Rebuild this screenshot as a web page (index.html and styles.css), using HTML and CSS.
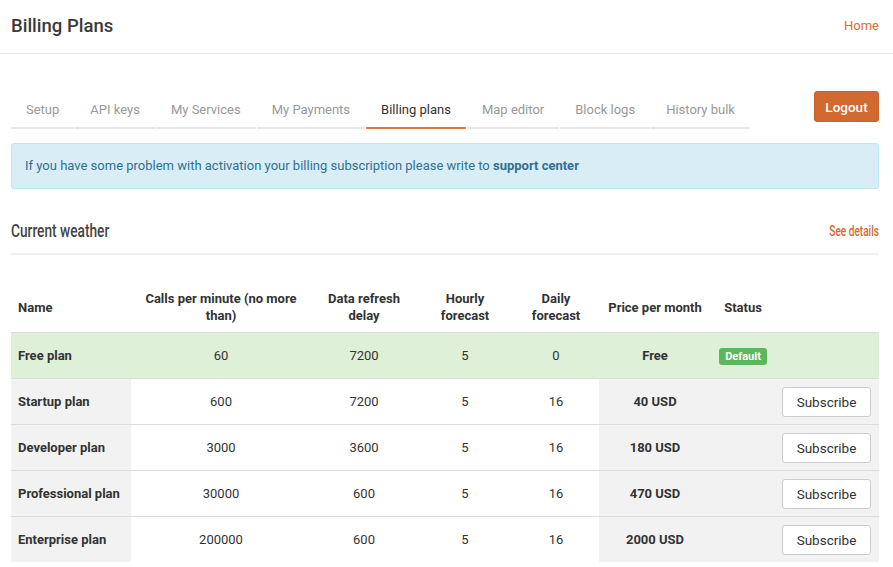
FILE: index.html
```html
<!DOCTYPE html>
<html>
<head>
<meta charset="utf-8">
<title>Billing Plans</title>
<link rel="stylesheet" href="styles.css">
</head>
<body>
<header class="topbar">
  <h1 class="title">Billing Plans</h1>
  <a class="home" href="#">Home</a>
</header>
<main class="page">
  <div class="navrow">
    <nav class="tabs">
      <a class="tab" href="#">Setup</a>
      <a class="tab" href="#">API keys</a>
      <a class="tab" href="#">My Services</a>
      <a class="tab" href="#">My Payments</a>
      <a class="tab active" href="#">Billing plans</a>
      <a class="tab" href="#">Map editor</a>
      <a class="tab" href="#">Block logs</a>
      <a class="tab" href="#">History bulk</a>
    </nav>
    <button class="logout">Logout</button>
  </div>
  <div class="alert">If you have some problem with activation your billing subscription please write to <b>support center</b></div>
  <div class="section-head">
    <h2 class="section-title"><span class="cond">Current weather</span></h2>
    <a class="details" href="#"><span class="cond">See details</span></a>
  </div>
  <table class="plans">
    <colgroup>
      <col class="c-name"><col class="c-calls"><col class="c-refresh"><col class="c-hourly"><col class="c-daily"><col class="c-price"><col class="c-status"><col class="c-action">
    </colgroup>
    <thead>
      <tr>
        <th class="left">Name</th>
        <th>Calls per minute (no more than)</th>
        <th>Data refresh delay</th>
        <th>Hourly forecast</th>
        <th>Daily forecast</th>
        <th>Price per month</th>
        <th>Status</th>
        <th></th>
      </tr>
    </thead>
    <tbody>
      <tr class="current">
        <td class="name">Free plan</td><td>60</td><td>7200</td><td>5</td><td>0</td><td class="price">Free</td><td class="status"><span class="badge">Default</span></td><td class="action"></td>
      </tr>
      <tr>
        <td class="name">Startup plan</td><td>600</td><td>7200</td><td>5</td><td>16</td><td class="price">40 USD</td><td class="status"></td><td class="action"><button class="sub">Subscribe</button></td>
      </tr>
      <tr>
        <td class="name">Developer plan</td><td>3000</td><td>3600</td><td>5</td><td>16</td><td class="price">180 USD</td><td class="status"></td><td class="action"><button class="sub">Subscribe</button></td>
      </tr>
      <tr>
        <td class="name">Professional plan</td><td>30000</td><td>600</td><td>5</td><td>16</td><td class="price">470 USD</td><td class="status"></td><td class="action"><button class="sub">Subscribe</button></td>
      </tr>
      <tr>
        <td class="name">Enterprise plan</td><td>200000</td><td>600</td><td>5</td><td>16</td><td class="price">2000 USD</td><td class="status"></td><td class="action"><button class="sub">Subscribe</button></td>
      </tr>
    </tbody>
  </table>
</main>
</body>
</html>
```
FILE: styles.css
```css
* { box-sizing: border-box; }
body {
  margin: 0;
  font-family: Roboto, "Liberation Sans", sans-serif;
  color: #333;
  background: #fff;
}
a { text-decoration: none; }
.topbar {
  height: 54px;
  border-bottom: 1px solid #e7e7e7;
  display: flex;
  align-items: center;
  justify-content: space-between;
  padding: 0 14px 2px 11px;
}
.title {
  margin: 0;
  font-size: 18.5px;
  font-weight: 500;
  color: #3a3a3a;
}
.home {
  font-size: 13px;
  color: #e0693a;
}
.page {
  padding: 0 14px 0 11px;
}
.navrow {
  display: flex;
  justify-content: space-between;
  align-items: flex-start;
  margin-top: 36px;
}
.tabs {
  display: flex;
  gap: 1px;
}
.tab {
  display: block;
  padding: 10px 15px 8px;
  line-height: 19px;
  font-size: 13px;
  color: #999;
  border-bottom: 2px solid #e6e6e6;
}
.tab.active {
  color: #333;
  border-bottom-color: #e0783f;
}
.logout {
  margin-top: 1px;
  height: 31px;
  width: 65px;
  border: 1px solid #c6622a;
  border-radius: 3px;
  background: #d2692e;
  color: #fff;
  font-family: inherit;
  font-size: 13.5px;
  font-weight: 500;
  padding: 0;
}
.alert {
  margin-top: 14px;
  background: #d9edf7;
  border: 1px solid #bce8f1;
  border-radius: 3px;
  color: #31708f;
  font-size: 13px;
  line-height: 20px;
  padding: 12px 13px;
}
.alert b { font-weight: 700; }
.section-head {
  margin-top: 30px;
  display: flex;
  justify-content: space-between;
  align-items: center;
  padding-bottom: 10px;
  border-bottom: 2px solid #f0f0f0;
}
.cond {
  display: inline-block;
  transform: scaleX(0.74);
}
.section-title {
  margin: 0;
  font-weight: 500;
  font-size: 18.5px;
  line-height: 24px;
  color: #444;
}
.section-title .cond { transform-origin: left center; }
.details {
  font-size: 14px;
  font-weight: 500;
  color: #d2692e;
}
.details .cond { transform-origin: right center; transform: scaleX(0.72); }
.plans {
  margin-top: 27px;
  width: 100%;
  border-collapse: collapse;
  table-layout: fixed;
  font-size: 13px;
  color: #333;
}
.c-name { width: 120px; }
.c-calls { width: 180px; }
.c-refresh { width: 106px; }
.c-hourly { width: 96px; }
.c-daily { width: 86px; }
.c-price { width: 112px; }
.c-status { width: 64px; }
.plans th {
  font-weight: 700;
  line-height: 17px;
  padding: 8px 7px;
  text-align: center;
  vertical-align: middle;
  color: #333;
}
.plans th.left { text-align: left; }
.plans td {
  border-top: 1px solid #dcdcdc;
  padding: 13px 7px;
  line-height: 19px;
  text-align: center;
  vertical-align: middle;
}
.plans td.name {
  text-align: left;
  font-weight: 700;
  background: #f2f2f2;
}
.plans td.price {
  font-weight: 700;
  background: #f2f2f2;
}
.plans td.status,
.plans td.action { background: #f2f2f2; }
.plans td.action {
  text-align: right;
  padding: 7px 8px 7px 7px;
}
.plans tr.current td { background: #dff0d8; }
.badge {
  display: inline-block;
  background: #5cb85c;
  color: #fff;
  font-size: 11px;
  font-weight: 700;
  line-height: 13px;
  padding: 2px 6px;
  border-radius: 3px;
}
.sub {
  height: 30px;
  width: 89px;
  background: #fff;
  border: 1px solid #ccc;
  border-radius: 3px;
  font-family: inherit;
  font-size: 13.5px;
  color: #333;
  padding: 0;
}
```
